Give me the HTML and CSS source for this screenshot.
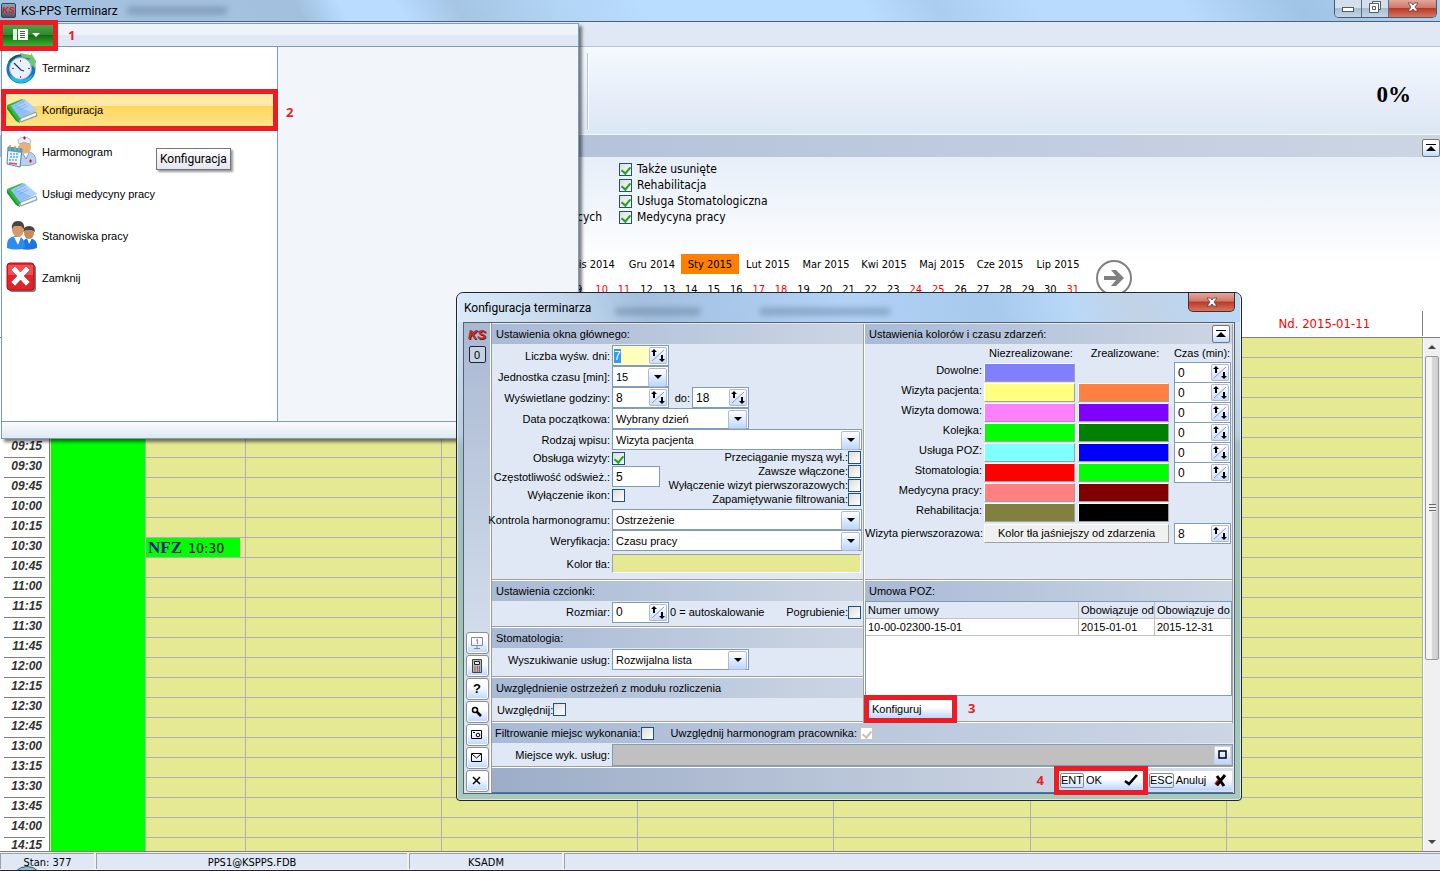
FILE: index.html
```html
<!DOCTYPE html>
<html lang="pl">
<head>
  <meta charset="UTF-8">
  <title>KS-PPS Terminarz</title>
  <link rel="stylesheet" href="styles.css">
</head>
<body>

  <!-- Wspólne ikony -->
  <svg class="defs" aria-hidden="true">
    <symbol id="i-spin" viewBox="0 0 18 17">
      <path d="M3 14L15 3" stroke="#999" fill="none"/>
      <path d="M5 2L8 5H6V9H4V5H2ZM13 15L16 12H14V8H12V12H10Z" fill="#000"/>
    </symbol>
    <symbol id="i-up" viewBox="0 0 16 16">
      <path d="M3 4h10v1H3zM8 6l5 5H3z" fill="#000"/>
    </symbol>
    <symbol id="i-book" viewBox="0 0 32 32">
      <path d="M3 13L15 28L31 22L30 18L14 24L5 12Z" fill="#a8c4da" stroke="#607c92" stroke-width=".6"/>
      <path d="M15 25L30 19V21L15 27Z" fill="#fff"/>
      <path d="M1 11L13 26L14 29L10 27L1 15Z" fill="#159a2c"/>
      <path d="M1 11L16 5L17 6L5 12L15 25L12 27Z" fill="#35b83c"/>
      <path d="M5 12L18 5L31 16L14 24Z" fill="#8fc0fb"/>
      <path d="M9 11L20 7L31 16L25 18Z" fill="#bcd9ff" opacity=".7"/>
      <path d="M9 12l9-4M11 14l9-4M13 16l9-4" stroke="#6a9be8" stroke-width=".6"/>
    </symbol>
    <symbol id="i-x" viewBox="0 0 12 10">
      <path d="M1 1h3.500l1.500 2 1.500-2H11L8 5l3 4H7.500L6 7 4.500 9H1l3-4z" fill="#fff" stroke="#5a3a3a" stroke-width=".8"/>
    </symbol>
  </svg>

  <div class="app">
    <header class="titlebar">
      <span class="app-icon">KS</span>
      <span class="app-title">KS-PPS Terminarz</span>
      <i class="ghost ghost-title"></i>
      <div class="win-buttons">
        <button aria-label="Minimalizuj"><svg width="14" height="12"><rect x="1.500" y="6.500" width="11" height="4" fill="#fff" stroke="#555b66"/></svg></button>
        <button aria-label="Przywróć"><svg width="14" height="12" fill="#fff" stroke="#555b66"><path d="M4.500 .5h8v8h-8z"/><path d="M1.500 2.500h9v9h-9z"/><path d="M4.500 5.500h3v3h-3z"/></svg></button>
        <button class="win-close" aria-label="Zamknij"><svg width="12" height="10"><use href="#i-x"/></svg></button>
      </div>
    </header>

    <div class="tabs"></div>
    <div class="ribbon"><i class="ribbon-sep"></i><span class="percent">0%</span></div>
    <div class="section-bar"><button class="mini" aria-label="Zwiń"><svg width="16" height="16"><use href="#i-up"/></svg></button></div>

    <section class="filters">
      <div class="filter-checks">
        <span class="filter-rest">cych</span>
        <div class="check-list">
          <label><input type="checkbox" checked>Także usunięte</label>
          <label><input type="checkbox" checked>Rehabilitacja</label>
          <label><input type="checkbox" checked>Usługa Stomatologiczna</label>
          <label><input type="checkbox" checked>Medycyna pracy</label>
        </div>
      </div>
      <div class="date-nav">
        <div>
          <div class="months">
            <a href="#">Lis 2014</a><a href="#">Gru 2014</a><a href="#" class="current">Sty 2015</a><a href="#">Lut 2015</a><a href="#">Mar 2015</a><a href="#">Kwi 2015</a><a href="#">Maj 2015</a><a href="#">Cze 2015</a><a href="#">Lip 2015</a>
          </div>
          <div class="days" id="days"></div>
        </div>
        <button class="next" aria-label="Dalej">
          <svg width="38" height="38"><circle cx="19" cy="19" r="17" fill="none" stroke="#808080" stroke-width="2"/><path d="M9 17h12l-5-6h5l8 8-8 8h-5l5-6H9z" fill="#808080"/></svg>
        </button>
      </div>
    </section>

    <div class="day-head"><span>Nd. 2015-01-11</span></div>

    <main class="calendar">
      <div class="calendar-view">
        <table>
          <colgroup><col class="col-time"><col class="col-busy"><col class="col-slot"><col><col><col><col><col><col></colgroup>
          <tbody id="slots"></tbody>
        </table>
      </div>
      <div class="scrollbar"><i class="arrow-up"></i><i class="thumb"></i><i class="arrow-down"></i></div>
    </main>

    <footer class="status">
      <span class="st-state">Stan: 377</span>
      <span class="st-base">PPS1@KSPPS.FDB</span>
      <span class="st-user">KSADM</span>
      <span class="st-rest"></span>
      <i class="orb"></i>
    </footer>
  </div>

  <!-- Menu aplikacji -->
  <nav class="menu">
    <div class="menu-top">
      <button class="menu-button marked" aria-label="Menu">
        <svg width="30" height="12"><rect width="4" height="11" fill="#e8f0e0"/><path d="M5 0h10v11H5z" fill="#fff"/><path d="M7 2.500h5M7 4.500h5M7 6.500h5M7 8.500h5" stroke="#3b6b30"/><path d="M19 4h8l-4 4z" fill="#fff"/></svg>
      </button>
      <b class="step">1</b>
    </div>
    <div class="menu-body">
      <div class="menu-list">
        <a href="#"><svg width="32" height="32" viewBox="0 0 32 32"><circle cx="15" cy="17" r="14.500" fill="#1675b5"/><path d="M2 10A15 15 0 0 1 28 10L23 13A8 8 0 0 0 8 8Z" fill="#155a50"/><path d="M14 1L25 3V1L30 9L29 16L19 8L25 7L16 5Z" fill="#6fc774"/><path d="M3 22Q15 34 27 22L24 28Q15 34 6 28Z" fill="#13c1ea"/><circle cx="14.500" cy="16.500" r="11" fill="#e6f2ff" stroke="#87aed8"/><path d="M8 11l7 7 3 1" stroke="#26374d" stroke-width="1.300" fill="none"/><path d="M14 8h1v2h-1zM14 24h1v2h-1zM6 16h2v1H6zM22 16h2v1h-2z" fill="#e02020"/></svg>Terminarz</a>
        <a href="#" class="active marked"><svg width="32" height="32"><use href="#i-book"/></svg>Konfiguracja</a>
        <a href="#"><svg width="32" height="32" viewBox="0 0 32 32"><path d="M13 29Q11 16 21 15Q31 17 30 27Q24 31 13 29Z" fill="#b9d0ee" stroke="#6f93bf" stroke-width=".7"/><ellipse cx="19" cy="11" rx="6" ry="7" fill="#e9b07b"/><path d="M12 4Q18-2 25 4L24 8Q18 5 13 8Z" fill="#e4ecf6" stroke="#8ba1bd" stroke-width=".6"/><path d="M17 2h3M18.500 .5v3M23 25h3M24.500 23.500v3" stroke="#d11" stroke-width="1.200"/><path d="M17 18l3 5 3-6" fill="#fff" stroke="#89a"/><path d="M2 11L16 13L14 31L1 28Z" fill="#eef7ff" stroke="#4287b8"/><path d="M2 11L16 13V17L2 15Z" fill="#34a5df"/><path d="M4 18h9M4 21h9M3 24h9" stroke="#65a5d8" stroke-width="1.500" stroke-dasharray="2 1"/><path d="M3 27l8 1" stroke="#e44" stroke-width="1.500"/><path d="M4 9v5M9 10v5M13 10v5" stroke="#d99b2b" stroke-width="1.500"/></svg>Harmonogram</a>
        <a href="#"><svg width="32" height="32"><use href="#i-book"/></svg>Usługi medycyny pracy</a>
        <a href="#"><svg width="32" height="32" viewBox="0 0 32 32"><path d="M15 29Q15 19 23 18Q32 19 31 28Q24 31 15 29Z" fill="#1b76dd"/><path d="M21 18l2 6 3-6z" fill="#fff"/><ellipse cx="23" cy="13" rx="5" ry="6" fill="#c58b58"/><path d="M17 12Q17 6 23 6T29 12L26 10H20Z" fill="#444"/><path d="M1 28Q0 17 9 16Q19 15 19 28Q9 31 1 28Z" fill="#2d8cf0"/><path d="M8 17l4 8 3-8z" fill="#fff"/><ellipse cx="12" cy="9" rx="6" ry="8" fill="#d49a68"/><path d="M6 9Q5 1 12 1T18 9L15 6H8Z" fill="#494540"/></svg>Stanowiska pracy</a>
        <a href="#"><svg width="32" height="32" viewBox="0 0 32 32"><rect x="3" y="3" width="27" height="27" rx="3" fill="#5c3a3a" opacity=".7"/><rect x="1" y="1" width="27" height="27" rx="3" fill="#e62229" stroke="#a81018"/><path d="M2 3h25v10H2z" fill="#f77" opacity=".5"/><path d="M5 8l4-4 5.500 6 5.500-6 4 4-6 6 6 6-4 4-5.500-6-5.500 6-4-4 6-6z" fill="#fff" stroke="#a54a50" stroke-width=".7"/></svg>Zamknij</a>
        <span class="tooltip">Konfiguracja</span>
      </div>
      <div class="menu-side"><b class="step">2</b></div>
    </div>
    <div class="menu-foot"></div>
  </nav>

  <!-- Okno konfiguracji -->
  <form class="dialog" role="dialog" aria-label="Konfiguracja terminarza">
    <div class="dialog-title">
      <span>Konfiguracja terminarza</span>
      <i class="ghost ghost-a"></i><i class="ghost ghost-b"></i>
      <button type="button" class="dialog-close" aria-label="Zamknij"><svg width="12" height="10"><use href="#i-x"/></svg></button>
    </div>
    <div class="client">
      <aside class="side">
        <b class="ks">KS</b>
        <button type="button" class="zero">0</button>
        <div class="tools">
          <button type="button" class="tool" aria-label="Stanowisko"><svg width="14" height="14" fill="none" stroke="#888"><path d="M1.500 1.500h11v8h-11zM4 12.500h6M7 10v2M6 4.500l1.500-1V8"/></svg></button>
          <button type="button" class="tool" aria-label="Kalkulator"><svg width="14" height="16"><path d="M2.500 1.500h9v13h-9z" fill="#bbb" stroke="#444"/><path d="M4.500 3.500h5v3h-5z" fill="#def" stroke="#222"/><path d="M4 9h2M4 11h2M4 13h2" stroke="#e33"/><path d="M7 9h4M7 11h4M7 13h4" stroke="#222" stroke-dasharray="1 1"/></svg></button>
          <button type="button" class="tool">?</button>
          <button type="button" class="tool" aria-label="Szukaj"><svg width="14" height="14" fill="none" stroke="#000"><circle cx="5" cy="5" r="2.500" stroke-width="1.500"/><path d="M7 7l4 4" stroke-width="2.500"/></svg></button>
          <button type="button" class="tool" aria-label="Zrzut ekranu"><svg width="14" height="12" fill="none" stroke="#000"><path d="M1.500 1.500h10v8h-10zM3 3.500h2"/><circle cx="8" cy="6" r="1.800"/></svg></button>
          <button type="button" class="tool" aria-label="Poczta"><svg width="14" height="12" fill="none" stroke="#000"><path d="M1.500 1.500h10v8h-10zM2 2l4.500 4L11 2"/></svg></button>
          <button type="button" class="tool" aria-label="Zamknij"><svg width="12" height="12"><path d="M2 2l7 7M9 2l-7 7" stroke="#000" stroke-width="1.500"/></svg></button>
        </div>
      </aside>

      <div class="content">
        <div class="columns">
          <div class="col-left">
            <section class="group">
              <h2>Ustawienia okna głównego:</h2>
              <div class="fields">
                <div class="field"><label for="dni">Liczba wyśw. dni:</label><span class="spin"><input id="dni" class="focused" value="7"><button type="button" aria-label="Zmień"><svg width="18" height="17"><use href="#i-spin"/></svg></button></span></div>
                <div class="field"><label for="jedn">Jednostka czasu [min]:</label><span class="combo combo-s"><select id="jedn"><option>15</option></select></span></div>
                <div class="field"><label for="godz">Wyświetlane godziny:</label><span class="spin"><input id="godz" value="8"><button type="button" aria-label="Zmień"><svg width="18" height="17"><use href="#i-spin"/></svg></button></span><label for="godz2" class="to">do:</label><span class="spin"><input id="godz2" value="18"><button type="button" aria-label="Zmień"><svg width="18" height="17"><use href="#i-spin"/></svg></button></span></div>
                <div class="field"><label for="data">Data początkowa:</label><span class="combo combo-m"><select id="data"><option>Wybrany dzień</option></select></span></div>
                <div class="field"><label for="rodzaj">Rodzaj wpisu:</label><span class="combo combo-l"><select id="rodzaj"><option>Wizyta pacjenta</option></select></span></div>
                <div class="pair">
                  <div>
                    <div class="field low"><label for="obsl">Obsługa wizyty:</label><input type="checkbox" id="obsl" checked></div>
                    <div class="field"><label for="czest">Częstotliwość odśwież.:</label><input id="czest" class="text" value="5"></div>
                    <div class="field low"><label for="ikon">Wyłączenie ikon:</label><input type="checkbox" id="ikon"></div>
                  </div>
                  <div class="options">
                    <label>Przeciąganie myszą wył.:<input type="checkbox"></label>
                    <label>Zawsze włączone:<input type="checkbox"></label>
                    <label>Wyłączenie wizyt pierwszorazowych:<input type="checkbox"></label>
                    <label>Zapamiętywanie filtrowania:<input type="checkbox"></label>
                  </div>
                </div>
                <div class="field"><label for="kontrola">Kontrola harmonogramu:</label><span class="combo combo-l"><select id="kontrola"><option>Ostrzeżenie</option></select></span></div>
                <div class="field"><label for="weryf">Weryfikacja:</label><span class="combo combo-l"><select id="weryf"><option>Czasu pracy</option></select></span></div>
                <div class="field tint"><label for="tlo">Kolor tła:</label><input type="color" id="tlo" class="wide" value="#e6e994"></div>
              </div>
            </section>
            <section class="group">
              <h2>Ustawienia czcionki:</h2>
              <div class="field font-row"><label for="rozm">Rozmiar:</label><span class="spin"><input id="rozm" value="0"><button type="button" aria-label="Zmień"><svg width="18" height="17"><use href="#i-spin"/></svg></button></span><span>0 = autoskalowanie</span><label class="bold-check">Pogrubienie:<input type="checkbox"></label></div>
            </section>
            <section class="group">
              <h2>Stomatologia:</h2>
              <div class="field dental-row"><label for="wysz">Wyszukiwanie usług:</label><span class="combo combo-m"><select id="wysz"><option>Rozwijalna lista</option></select></span></div>
            </section>
            <section class="group">
              <h2>Uwzględnienie ostrzeżeń z modułu rozliczenia</h2>
              <label class="warn-row">Uwzględnij:<input type="checkbox"></label>
            </section>
          </div>

          <div class="col-right">
            <section class="group grow">
              <h2>Ustawienia kolorów i czasu zdarzeń:<button type="button" class="mini" aria-label="Zwiń"><svg width="16" height="16"><use href="#i-up"/></svg></button></h2>
              <table class="colors">
                <colgroup><col class="c-name"><col class="c-swatch"><col class="c-swatch"><col></colgroup>
                <thead><tr><td></td><th>Niezrealizowane:</th><th>Zrealizowane:</th><th class="time-head">Czas (min):</th></tr></thead>
                <tbody id="colors"></tbody>
              </table>
            </section>
            <section class="group contract">
              <h2>Umowa POZ:</h2>
              <div class="list">
                <table class="contracts">
                  <colgroup><col><col class="c-from"><col class="c-to"></colgroup>
                  <thead><tr><th>Numer umowy</th><th>Obowiązuje od</th><th>Obowiązuje do</th></tr></thead>
                  <tbody><tr><td>10-00-02300-15-01</td><td>2015-01-01</td><td>2015-12-31</td></tr></tbody>
                </table>
              </div>
              <div class="config-row"><button type="button" class="config marked">Konfiguruj</button><b class="step">3</b></div>
            </section>
          </div>
        </div>

        <div class="place-bar">
          <label>Filtrowanie miejsc wykonania:<input type="checkbox"></label>
          <label class="by-staff">Uwzględnij harmonogram pracownika:<input type="checkbox" checked disabled></label>
        </div>
        <div class="place-row"><label for="miejsce">Miejsce wyk. usług:</label><span class="place"><input id="miejsce" disabled><button type="button" aria-label="Wybierz"><svg width="9" height="9"><path d="M1 1h7v7H1z" fill="none" stroke="#000" stroke-width="1.500"/></svg></button></span></div>
        <div class="actions">
          <b class="step">4</b>
          <button type="button" class="marked"><kbd>ENT</kbd>OK<svg width="14" height="12"><path d="M1 7l4 4 8-10" fill="none" stroke="#0a2" stroke-width="1"/><path d="M1 7l4 3 8-9" fill="none" stroke="#000" stroke-width="2.500"/></svg></button>
          <button type="button"><kbd>ESC</kbd>Anuluj<svg width="13" height="13"><path d="M2 11L5 7" stroke="#d00" stroke-width="4"/><path d="M3 2l7 10M11 1L3 11" stroke="#000" stroke-width="3"/></svg></button>
        </div>
      </div>
    </div>
  </form>

  <script>
    // --- Dni miesiąca ---
    const redDays = [10, 11, 17, 18, 24, 25, 31];
    let days = '';
    for (let d = 9; d <= 31; d++) {
      days += '<a href="#"' + (redDays.includes(d) ? ' class="red"' : '') + '>' + d + '</a>';
    }
    document.getElementById('days').innerHTML = days;

    // --- Siatka godzin co 15 minut ---
    const first = 8 * 60;
    const count = 26;
    let slots = '';
    for (let i = 0; i < count; i++) {
      const t = first + i * 15;
      const time = String(Math.floor(t / 60)).padStart(2, '0') + ':' + String(t % 60).padStart(2, '0');
      slots += '<tr><th><div>' + time + '</div></th>';
      if (i === 0) slots += '<td class="busy" rowspan="' + count + '"></td>';
      slots += '<td>' + (time === '10:30' ? '<div class="visit"><b>NFZ</b>10:30</div>' : '') + '</td>';
      slots += '<td></td>'.repeat(6) + '</tr>';
    }
    document.getElementById('slots').innerHTML = slots;

    // --- Kolory zdarzeń ---
    const spin = function (value, name) {
      return '<span class="spin"><input aria-label="Czas: ' + name + '" value="' + value + '"><button type="button" aria-label="Zmień"><svg width="18" height="17"><use href="#i-spin"/></svg></button></span>';
    };
    const swatch = function (color, name) {
      return color ? '<input type="color" aria-label="' + name + '" value="' + color + '">' : '';
    };
    const events = [
      ['Dowolne', '#8080ff', '', true],
      ['Wizyta pacjenta', '#ffff80', '#ff8040', true],
      ['Wizyta domowa', '#ff80ff', '#8000ff', true],
      ['Kolejka', '#00ff00', '#008000', true],
      ['Usługa POZ', '#80ffff', '#0000ff', true],
      ['Stomatologia', '#ff0000', '#00ff00', true],
      ['Medycyna pracy', '#ff8080', '#800000', false],
      ['Rehabilitacja', '#808040', '#000000', false]
    ];
    let rows = '';
    events.forEach(function (e) {
      rows += '<tr><th>' + e[0] + ':</th><td>' + swatch(e[1], e[0]) + '</td><td>' + swatch(e[2], e[0]) + '</td><td>' + (e[3] ? spin(0, e[0]) : '') + '</td></tr>';
    });
    rows += '<tr class="first-visit"><th>Wizyta pierwszorazowa:</th><td colspan="2"><button type="button" class="lighter">Kolor tła jaśniejszy od zdarzenia</button></td><td>' + spin(8, 'Wizyta pierwszorazowa') + '</td></tr>';
    document.getElementById('colors').innerHTML = rows;

    const dni = document.getElementById('dni');
    dni.focus();
    dni.select();
  </script>

</body>
</html>
```
FILE: styles.css
```css
* {
  box-sizing: border-box;
}

body {
  margin: 0;
  position: relative;
  font-family: "DejaVu Sans Condensed", "DejaVu Sans", sans-serif;
  font-stretch: condensed;
  font-size: 11px;
  color: #000;
  overflow: hidden;
}

button, input, select {
  font: inherit;
  color: inherit;
  margin: 0;
  padding: 0;
  border-radius: 0;
  outline: none;
}

a {
  color: inherit;
  text-decoration: none;
}

.defs {
  position: absolute;
  width: 0;
  height: 0;
}

.app {
  display: flex;
  flex-direction: column;
  height: 100vh;
}

/* --- Pasek tytułu --- */
.titlebar {
  display: flex;
  align-items: center;
  flex: none;
  height: 22px;
  padding-left: 1px;
  border-bottom: 1px solid #506070;
  background: linear-gradient(60deg, #a4c2e0 0 17%, #a2c0de 21%, #b9dcff 24% 28%, #a6c5e4 32%, #b2d4f5 39%, #b9ddff 45% 60%, #abcdf0 65%, #b9dbfd 72% 82%, #9fc4e6 90%, #b0d2f0);
}

.app-icon {
  width: 15px;
  height: 15px;
  border: 1px solid #345;
  border-radius: 2px;
  background: linear-gradient(#8ab, #456);
  font: italic bold 9px/13px "Liberation Sans", sans-serif;
  color: #e11;
  text-align: center;
}

.app-title {
  margin-left: 5px;
  font: 12px/20px Roboto, sans-serif;
}

.ghost {
  height: 7px;
  background: #37506a;
  opacity: .35;
  filter: blur(3px);
}

.ghost-title {
  width: 100px;
  margin-left: 9px;
}

.win-buttons {
  display: flex;
  align-self: flex-start;
  margin: 0 3px 0 auto;
  height: 18px;
  border: 1px solid #4b5a6b;
  border-top: 0;
  border-radius: 0 0 5px 5px;
  overflow: hidden;
}

.win-buttons button {
  width: 27px;
  border: 0;
  border-right: 1px solid #5d6d80;
  background: linear-gradient(#d3dfec 45%, #a9bbd0 50%, #c2d6e8);
}

.win-buttons .win-close {
  width: 47px;
  border: 0;
}

.win-buttons .win-close, .dialog-close {
  background: linear-gradient(#e2a79d, #d0786a 45%, #b93a26 50%, #d6765f);
}

/* --- Wstążka --- */
.tabs {
  flex: none;
  height: 25px;
  border-bottom: 1px solid #b5c5df;
  background: #dfe8f4;
}

.ribbon {
  display: flex;
  flex: none;
  align-items: center;
  justify-content: space-between;
  height: 88px;
  padding: 0 29px 0 587px;
  border-bottom: 1px solid #f5f9fd;
  background: linear-gradient(#f5faff, #e5ecf8 65%, #dce8f5);
}

.ribbon-sep {
  width: 2px;
  height: 76px;
  border-left: 1px solid #b8c4d8;
  border-right: 1px solid #fff;
}

.percent {
  padding-top: 8px;
  font: bold 23px/30px "Liberation Serif", serif;
}

.section-bar {
  display: flex;
  justify-content: flex-end;
  align-items: flex-end;
  flex: none;
  height: 22px;
  background: linear-gradient(90deg, #a7b8d4, #b5c2da 40%, #ccd5e3);
}

.mini {
  display: flex;
  width: 18px;
  height: 18px;
  border: 1px solid #777;
  border-radius: 2px;
  background: linear-gradient(#fff 40%, #bfd8ff);
}

/* --- Filtry --- */
.filters {
  flex: none;
  height: 153px;
  padding-left: 565px;
  background: linear-gradient(#e6eef9, #fff 70%);
}

.filter-checks {
  display: flex;
  align-items: flex-end;
  height: 72px;
  padding-bottom: 4px;
  font-size: 12px;
}

.filter-rest {
  width: 54px;
  padding-left: 12px;
  line-height: 16px;
}

.check-list label {
  display: flex;
  align-items: center;
  gap: 5px;
  height: 16px;
}

input[type="checkbox"] {
  appearance: none;
  flex: none;
  width: 13px;
  height: 13px;
  border: 1px solid #1c5180;
  background: linear-gradient(135deg, #dcdcd7, #fff);
}

input[type="checkbox"]:checked::after {
  content: "";
  display: block;
  width: 4px;
  height: 7px;
  margin: 1px 0 0 3px;
  border: solid #21a121;
  border-width: 0 2px 2px 0;
  transform: rotate(40deg);
}

input[type="checkbox"]:disabled {
  border-color: #cac8bb;
  background: #fff;
}

input[type="checkbox"]:disabled:checked::after {
  border-color: #c4c2b4;
}

.date-nav {
  display: flex;
  gap: 8px;
  padding-top: 25px;
}

.months {
  display: grid;
  grid-template-columns: repeat(9, 58px);
  height: 20px;
  line-height: 22px;
  text-align: center;
}

.months .current {
  height: 20px;
  background: #ff8000;
}

.days {
  display: grid;
  grid-template-columns: repeat(23, 1fr);
  margin: 7px 3px 0 3px;
  line-height: 18px;
  text-align: center;
}

.red {
  color: #f00;
}

.next {
  align-self: flex-start;
  width: 38px;
  height: 38px;
  margin-top: 5px;
  border: 0;
  background: none;
}

/* --- Kalendarz --- */
.day-head {
  display: grid;
  grid-template-columns: 245px repeat(6, 1fr);
  flex: none;
  height: 28px;
  padding: 1px 17px 5px 0;
  border-bottom: 1px solid #808080;
  background: #fff;
}

.day-head span {
  grid-column: 7;
  border-right: 1px solid #808080;
  font-family: "DejaVu Sans", sans-serif;
  font-stretch: condensed;
  font-size: 13px;
  line-height: 25px;
  text-align: center;
  color: #f00;
}

.calendar {
  display: flex;
  flex: 1;
  min-height: 0;
}

.calendar-view {
  flex: 1;
  overflow: hidden;
}

.calendar table {
  width: 100%;
  table-layout: fixed;
  border-collapse: separate;
  border-spacing: 0;
}

.col-time {
  width: 50px;
}

.col-busy {
  width: 96px;
}

.col-slot {
  width: 100px;
}

.calendar td, .calendar th {
  height: 20px;
  padding: 0;
  border: solid #b0b0b0;
  border-width: 0 1px 1px 0;
  background: #e6e994;
}

.calendar th {
  padding: 0 4px;
  border-right-color: #808080;
  border-bottom: 0;
  background: #fff;
}

.calendar th div {
  height: 20px;
  padding-right: 3px;
  border-bottom: 1px solid #808080;
  font: italic bold 12px/16px "Liberation Sans", sans-serif;
  text-align: right;
  color: #333;
}

/* ostatni wiersz jest krótszy */
.calendar tr:last-child th, .calendar tr:last-child td {
  border-bottom: 0;
}

.calendar tr:last-child th div {
  border-bottom: 0;
  line-height: 15px;
}

.calendar td.busy {
  border-left: 1px solid #e6e994;
  background: #0f0;
}

.visit {
  width: 94px;
  height: 19px;
  padding-left: 2px;
  background: #0f0;
  font-size: 14px;
  line-height: 19px;
}

.visit b {
  margin-right: 6px;
  font-family: "Liberation Serif", serif;
  font-size: 17px;
  line-height: 19px;
  color: #2a1a8c;
}

.scrollbar {
  display: flex;
  flex-direction: column;
  align-items: center;
  width: 17px;
  border-left: 1px solid #fff;
  background: #f0f0f0;
}

.arrow-up, .arrow-down {
  margin: 7px 0;
  border: 4px solid transparent;
}

.arrow-up {
  border-top: 0;
  border-bottom-color: #444;
}

.arrow-down {
  margin-top: auto;
  border-bottom: 0;
  border-top-color: #444;
}

.thumb {
  width: 14px;
  height: 304px;
  border: 1px solid #979797;
  border-radius: 2px;
  background: repeating-linear-gradient(#666 0 1px, #eee 1px 3px) center / 7px 8px no-repeat, linear-gradient(90deg, #f5f5f5 45%, #dadada 50%, #cfcfcf);
}

/* --- Pasek stanu --- */
.status {
  position: relative;
  display: flex;
  flex: none;
  gap: 2px;
  height: 20px;
  padding: 1px 0;
  border-top: 1px solid #808080;
  border-bottom: 1px solid #222;
  background: #f0f0f0;
  overflow: hidden;
}

.status span {
  border: solid #a0a0a0;
  border-width: 1px 0 0 1px;
  background: #dfe8f4;
  line-height: 18px;
  text-align: center;
}

.st-state {
  width: 94px;
}

.st-base {
  width: 311px;
}

.st-user {
  width: 153px;
}

.st-rest {
  flex: 1;
}

.orb {
  position: absolute;
  left: 11px;
  top: 14px;
  width: 32px;
  height: 32px;
  border: 1px solid #2c5b80;
  border-radius: 50%;
  background: #9fbdd2;
}

/* --- Znaczniki kroków --- */
.step {
  font: bold 13px/16px "Open Sans", sans-serif;
  color: #ed1c24;
}

.marked {
  outline: 5px solid #ed1c24;
}

/* --- Menu aplikacji --- */
.menu {
  position: absolute;
  left: 1px;
  top: 23px;
  width: 578px;
  border: 1px solid #7c9cbd;
  background: #f2f5fa;
  box-shadow: 3px 3px 3px rgba(0, 0, 0, .5);
}

.menu-top {
  display: flex;
  align-items: center;
  gap: 15px;
  height: 23px;
  padding-left: 1px;
  border-bottom: 1px solid #7c9cbd;
  background: linear-gradient(#eef3fa 50%, #dfe8f4 50%);
}

.menu-button {
  position: relative;
  z-index: 1;
  display: flex;
  align-items: center;
  justify-content: center;
  width: 50px;
  height: 21px;
  border: 0;
  background: linear-gradient(#4fa04c, #2b8a2b 50%, #0f6f10 50%, #3fae35);
}

.menu-body {
  display: flex;
  height: 374px;
}

.menu-list {
  position: relative;
  width: 276px;
  border-right: 1px solid #7c9cbd;
  background: #fff;
}

.menu-list a {
  display: flex;
  align-items: center;
  gap: 4px;
  height: 42px;
  padding-left: 4px;
  font: 11px/16px "Liberation Sans", sans-serif;
}

.menu-list .active {
  height: 40px;
  margin: 1px 0;
  background: linear-gradient(#ffe9a6 12%, #ffe9a6 40%, #ffd65c 41%, #ffe795);
  outline-offset: -4px;
}

.menu-side {
  padding: 57px 0 0 8px;
}

.menu-foot {
  height: 17px;
  border-top: 1px solid #7c9cbd;
  background: linear-gradient(#fafcfe, #dfe8f4);
}

.tooltip {
  position: absolute;
  left: 154px;
  top: 101px;
  padding: 0 3px;
  border: 1px solid #767676;
  background: linear-gradient(#fff, #e4e5f0);
  box-shadow: 2px 2px 2px rgba(0, 0, 0, .4);
  font: 12px/20px Roboto, sans-serif;
}

/* --- Okno konfiguracji --- */
.dialog {
  position: absolute;
  left: 456px;
  top: 292px;
  width: 786px;
  padding: 0 6px 6px;
  border: 1px solid #1c2730;
  border-radius: 7px 7px 4px 4px;
  background: linear-gradient(#d3e5f8, #b9cde0 28%, #a5bfca 30%, #9dc0b2 60%, #a9c9be);
  box-shadow: inset 0 0 0 1px rgba(255, 255, 255, .6);
  font: 11px/16px "Liberation Sans", sans-serif;
}

.dialog-title {
  display: flex;
  align-items: center;
  height: 29px;
  margin: 0 -5px;
  padding-left: 6px;
  border-radius: 6px 6px 0 0;
  background: linear-gradient(70deg, #dcebf9, #c4d8ec 14%, #a3c0e0 24%, #b2d2f6 50%, #a6c9ec 68%, #b9d8f8 78%, #c2d3e6 86%, #b8d8f8);
  font: 12px/20px Roboto, sans-serif;
}

.ghost-a {
  width: 85px;
  margin: 8px 0 0 24px;
}

.ghost-b {
  width: 130px;
  margin: 8px 0 0 60px;
}

.dialog-close {
  align-self: flex-start;
  width: 47px;
  height: 19px;
  margin: 0 5px 0 auto;
  border: 1px solid #4b2a30;
  border-top: 0;
  border-radius: 0 0 5px 5px;
}

.client {
  display: flex;
  border: 1px solid #56616c;
  background: #dfe8f4;
}

.side {
  display: flex;
  flex-direction: column;
  align-items: center;
  width: 27px;
  border-right: 1px solid #fff;
  background: linear-gradient(#a9b9d3, #dbe3ef 80%);
}

.ks {
  margin-top: 3px;
  font: italic bold 13px/17px "Liberation Sans", sans-serif;
  color: #c82a20;
  text-shadow: 1px 1px 0 #5a2020;
}

.zero {
  width: 17px;
  height: 17px;
  margin-top: 3px;
  border: 1px solid #223;
  border-radius: 2px;
  background: #c5d2e4;
}

.tools {
  margin-top: auto;
}

.tool {
  display: flex;
  align-items: center;
  justify-content: center;
  width: 23px;
  height: 22px;
  margin-bottom: 1px;
  border: 1px solid #8a8f98;
  border-radius: 3px;
  box-shadow: inset 0 0 0 1px #fff;
  background: linear-gradient(#fff 35%, #bcd6ff);
  font-weight: bold;
  font-size: 13px;
}

.content {
  flex: 1;
  padding: 1px 1px 0 0;
  border-left: 1px solid #9a9a9a;
}

.columns {
  display: grid;
  grid-template-columns: 372px 1fr;
}

.col-left {
  border-right: 1px solid #a0a0a0;
}

.col-right {
  display: flex;
  flex-direction: column;
  border-left: 1px solid #fff;
  border-right: 1px solid #a0a0a0;
}

.group {
  border-bottom: 1px solid #a0a0a0;
  box-shadow: 0 1px 0 #fff;
  margin-bottom: 1px;
}

.group h2 {
  display: flex;
  align-items: center;
  justify-content: space-between;
  height: 20px;
  margin: 0;
  padding: 0 2px 0 4px;
  background: linear-gradient(90deg, #a9bad6, #ccd5e3);
  font: inherit;
}

.fields {
  height: 235px;
  padding-top: 1px;
}

.field {
  display: flex;
  align-items: center;
  height: 21px;
}

.field > label:first-child {
  display: flex;
  justify-content: flex-end;
  flex: none;
  width: 120px;
  padding-right: 2px;
  white-space: nowrap;
}

.field.low {
  height: 16px;
}

.spin, .combo {
  display: flex;
  align-items: center;
  width: 57px;
  height: 21px;
  border: 1px solid #7f9db9;
  background: #fff;
}

.spin input {
  flex: 1;
  width: 20px;
  height: 19px;
  padding-left: 3px;
  border: 0;
  background: none;
  font-size: 12px;
}

.spin .focused {
  align-self: stretch;
  padding-left: 1px;
  background: #ffffc0;
}

.focused::selection {
  background: #3399ff;
  color: #fff;
}

.spin button {
  display: flex;
  width: 18px;
  height: 17px;
  margin-right: 1px;
  border: 0;
  border-radius: 2px;
  box-shadow: inset 0 0 0 1px #b8b8c8;
  background: linear-gradient(#fff, #c6dcff);
}

.to {
  width: 23px;
  padding-right: 2px;
  text-align: right;
}

.combo {
  position: relative;
}

.combo select {
  appearance: none;
  width: 100%;
  height: 19px;
  padding-left: 3px;
  border: 0;
  background: none;
}

.combo::before {
  content: "";
  position: absolute;
  right: 1px;
  top: 1px;
  width: 17px;
  height: 17px;
  border: 1px solid #b8b8c8;
  border-radius: 2px;
  background: linear-gradient(#fff, #bcd6ff);
}

.combo::after {
  content: "";
  position: absolute;
  right: 6px;
  top: 8px;
  border: 4px solid transparent;
  border-top-color: #000;
  border-bottom: 0;
}

.combo-m {
  width: 137px;
}

.combo-l {
  width: 250px;
}

.text {
  width: 48px;
  height: 21px;
  padding-left: 3px;
  border: 1px solid #7f9db9;
  background: #fff;
  font-size: 12px;
}

.pair {
  display: flex;
  justify-content: space-between;
  height: 59px;
}

.options {
  padding-right: 2px;
}

.options label {
  display: flex;
  justify-content: flex-end;
  align-items: center;
  height: 14px;
}

input[type="color"] {
  appearance: none;
  display: block;
  width: 91px;
  height: 19px;
  border: 1px solid #fff;
  border-right-color: #a0a0a0;
  border-bottom-color: #a0a0a0;
  background: none;
}

input[type="color"]::-webkit-color-swatch-wrapper {
  padding: 0;
}

input[type="color"]::-webkit-color-swatch {
  border: 0;
  border-radius: 0;
}

.tint {
  margin-top: 2px;
}

input.wide {
  width: 249px;
  border-color: #a0a0a0 #fff #fff #a0a0a0;
}

.font-row {
  height: 25px;
  padding-bottom: 3px;
}

.font-row > span:nth-of-type(2) {
  padding-left: 1px;
}

.bold-check {
  display: flex;
  align-items: center;
  margin-left: auto;
  padding-right: 2px;
}

.dental-row {
  height: 28px;
  padding-bottom: 5px;
}

.warn-row {
  display: flex;
  align-items: center;
  height: 23px;
  padding-left: 5px;
}

/* --- Kolory --- */
.grow {
  height: 256px;
}

.colors {
  width: 100%;
  table-layout: fixed;
  border-spacing: 0;
}

.c-name {
  width: 119px;
}

.c-swatch {
  width: 94px;
}

.colors th, .colors td {
  height: 20px;
  padding: 0;
  font-weight: normal;
}

.colors thead th, .colors thead td {
  height: 18px;
  text-align: center;
  line-height: 16px;
  white-space: nowrap;
}

.colors tbody th {
  padding-right: 2px;
  line-height: 16px;
  text-align: right;
  vertical-align: top;
  white-space: nowrap;
}

.colors .spin {
  margin: 0 0 -1px 2px;
}

.colors .first-visit td, .colors .first-visit th {
  height: 22px;
  vertical-align: middle;
}

.lighter {
  width: 185px;
  height: 19px;
  border: 1px solid #fff;
  border-right-color: #a0a0a0;
  border-bottom-color: #a0a0a0;
  background: #f0f0f0;
}

/* --- Umowa POZ --- */
.contract {
  flex: 1;
}

.list {
  height: 95px;
  border: 1px solid #7f9db9;
  background: #fff;
}

.contracts {
  width: 100%;
  table-layout: fixed;
  border-spacing: 0;
}

.c-from, .c-to {
  width: 76px;
}

.contracts th, .contracts td {
  height: 17px;
  padding: 0 0 0 2px;
  border: solid #c0c0c0;
  border-width: 0 1px 1px 0;
  font-weight: normal;
  line-height: 14px;
  text-align: left;
  white-space: nowrap;
}

.contracts th:last-child, .contracts td:last-child {
  border-right: 0;
}

.contracts th {
  background: #dfe8f4;
}

.config-row {
  display: flex;
  gap: 16px;
  padding: 4px 0 0 4px;
}

.config {
  width: 83px;
  height: 18px;
  padding-left: 3px;
  border: 0;
  background: linear-gradient(#fff 40%, #bcd6ff);
  text-align: left;
}

.place-bar {
  display: flex;
  align-items: center;
  height: 20px;
  padding-left: 3px;
  background: linear-gradient(90deg, #a9bad6, #ccd5e3);
}

.place-bar label {
  display: flex;
  align-items: center;
}

.by-staff {
  margin-left: 17px;
}

.by-staff input {
  margin-left: 3px;
}

.place-row {
  display: flex;
  align-items: center;
  height: 24px;
  border-bottom: 1px solid #a0a0a0;
}

.place-row label {
  width: 120px;
  padding-right: 2px;
  text-align: right;
}

.place {
  display: flex;
  align-items: center;
  flex: 1;
  height: 22px;
  border: 1px solid #7f9db9;
  background: #c0c0c0;
}

.place input {
  flex: 1;
  border: 0;
  background: none;
}

.place button {
  display: flex;
  align-items: center;
  justify-content: center;
  width: 17px;
  height: 18px;
  margin-right: 1px;
  border: 1px solid #d0d4e0;
  background: linear-gradient(#fff, #bcd6ff);
}

.actions {
  display: flex;
  align-items: center;
  justify-content: flex-end;
  gap: 5px;
  height: 26px;
  padding-right: 1px;
  border-top: 1px solid #fff;
  border-bottom: 1px solid #3b76c0;
  background: linear-gradient(90deg, #9dadc8, #d8dfe9);
}

.actions .step {
  margin-right: 10px;
}

.actions button {
  display: flex;
  align-items: center;
  gap: 2px;
  width: 84px;
  height: 19px;
  padding: 0 5px 0 1px;
  border: 0;
  background: linear-gradient(#fff 40%, #bcd6ff);
}

.actions svg {
  margin-left: auto;
}

kbd {
  border: 1px solid #888;
  border-radius: 2px;
  font: inherit;
  line-height: 13px;
}
```
